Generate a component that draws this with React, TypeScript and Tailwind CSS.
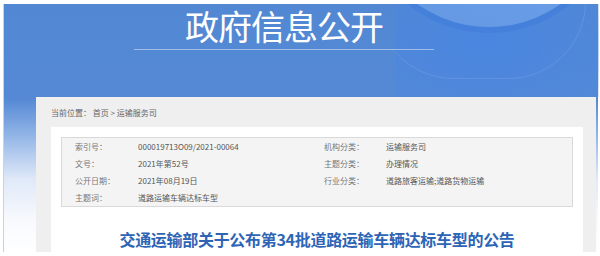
import React from "react";

const rows: [string, string, string?, string?][] = [
  ["索引号：", "000019713O09/2021-00064", "机构分类：", "运输服务司"],
  ["文号：", "2021年第52号", "主题分类：", "办理情况"],
  ["公开日期：", "2021年08月19日", "行业分类：", "道路旅客运输;道路货物运输"],
  ["主题词：", "道路运输车辆达标车型"],
];

export default function App() {
  return (
    <div
      className="w-[600px] h-[256px] bg-white overflow-hidden pl-[3px] pt-[4px] pr-[2px]"
      style={{ fontFamily: '"Noto Sans CJK SC", "Noto Sans", sans-serif' }}
    >
      <div className="relative h-[248px] border-l border-[#c9d3e0] bg-[linear-gradient(180deg,#5288d3_0px,#5589d5_95px,#8fb3e6_130px,#dfe9f8_175px,#f7f9fd_215px,#ffffff_248px)]">
        {/* decorations, clipped to the area right of the title */}
        <div className="absolute left-[392px] top-0 w-[203px] h-[93px] overflow-hidden">
          <div className="absolute left-[-92px] top-[-60px] w-[360px] h-[200px] rounded-full bg-[radial-gradient(closest-side,#4a86e0,rgba(74,134,224,0))]" />
          <div className="absolute left-[-36px] top-[-229px] w-[258px] h-[258px] rounded-full bg-[#3f7dda]/60" />
          <div className="absolute left-[-30px] top-[-223px] w-[246px] h-[246px] rounded-full bg-[linear-gradient(200deg,#7aaaf0,#6397e2)]" />
          <div className="absolute left-[-20px] top-[-80px] w-[210px] h-[155px] rounded-full border border-white/10" />
        </div>
        {/* header */}
        <div className="relative h-[93px] flex flex-col items-center pr-[34px]">
          <div className="-mt-[3px] text-[34px] leading-[50px] text-white tracking-[-1px]">政府信息公开</div>
          <div className="-mt-[2px] w-[300px] h-px bg-white/45" />
        </div>
        {/* panel */}
        <div className="relative ml-[32px] mr-[2px] h-[155px] overflow-hidden bg-[#efefef] pl-[15px] pr-[13px] pt-[10px]">
          <div className="text-[8px] leading-[12px] text-[#666]">
            当前位置： 首页 &gt; 运输服务司
          </div>
          <div className="mt-[8px] h-[200px] bg-white px-[10px] pt-[10px]">
            <div className="border border-[#d9d9d9] bg-[#f4f4f4] pl-[13px]">
              {rows.map((r, i) => (
                <div
                  key={i}
                  className="grid grid-cols-[63px_186px_62px_1fr] h-[17px] items-center text-[8px] text-[#555]"
                >
                  <span className="text-[#777]">{r[0]}</span>
                  <span>{r[1]}</span>
                  <span className="text-[#777]">{r[2] ?? ""}</span>
                  <span>{r[3] ?? ""}</span>
                </div>
              ))}
            </div>
            <div className="mt-[22px] text-center text-[16px] leading-[20px] font-bold text-[#2e64b5] tracking-[-0.3px]">
              交通运输部关于公布第34批道路运输车辆达标车型的公告
            </div>
          </div>
        </div>
      </div>
    </div>
  );
}
